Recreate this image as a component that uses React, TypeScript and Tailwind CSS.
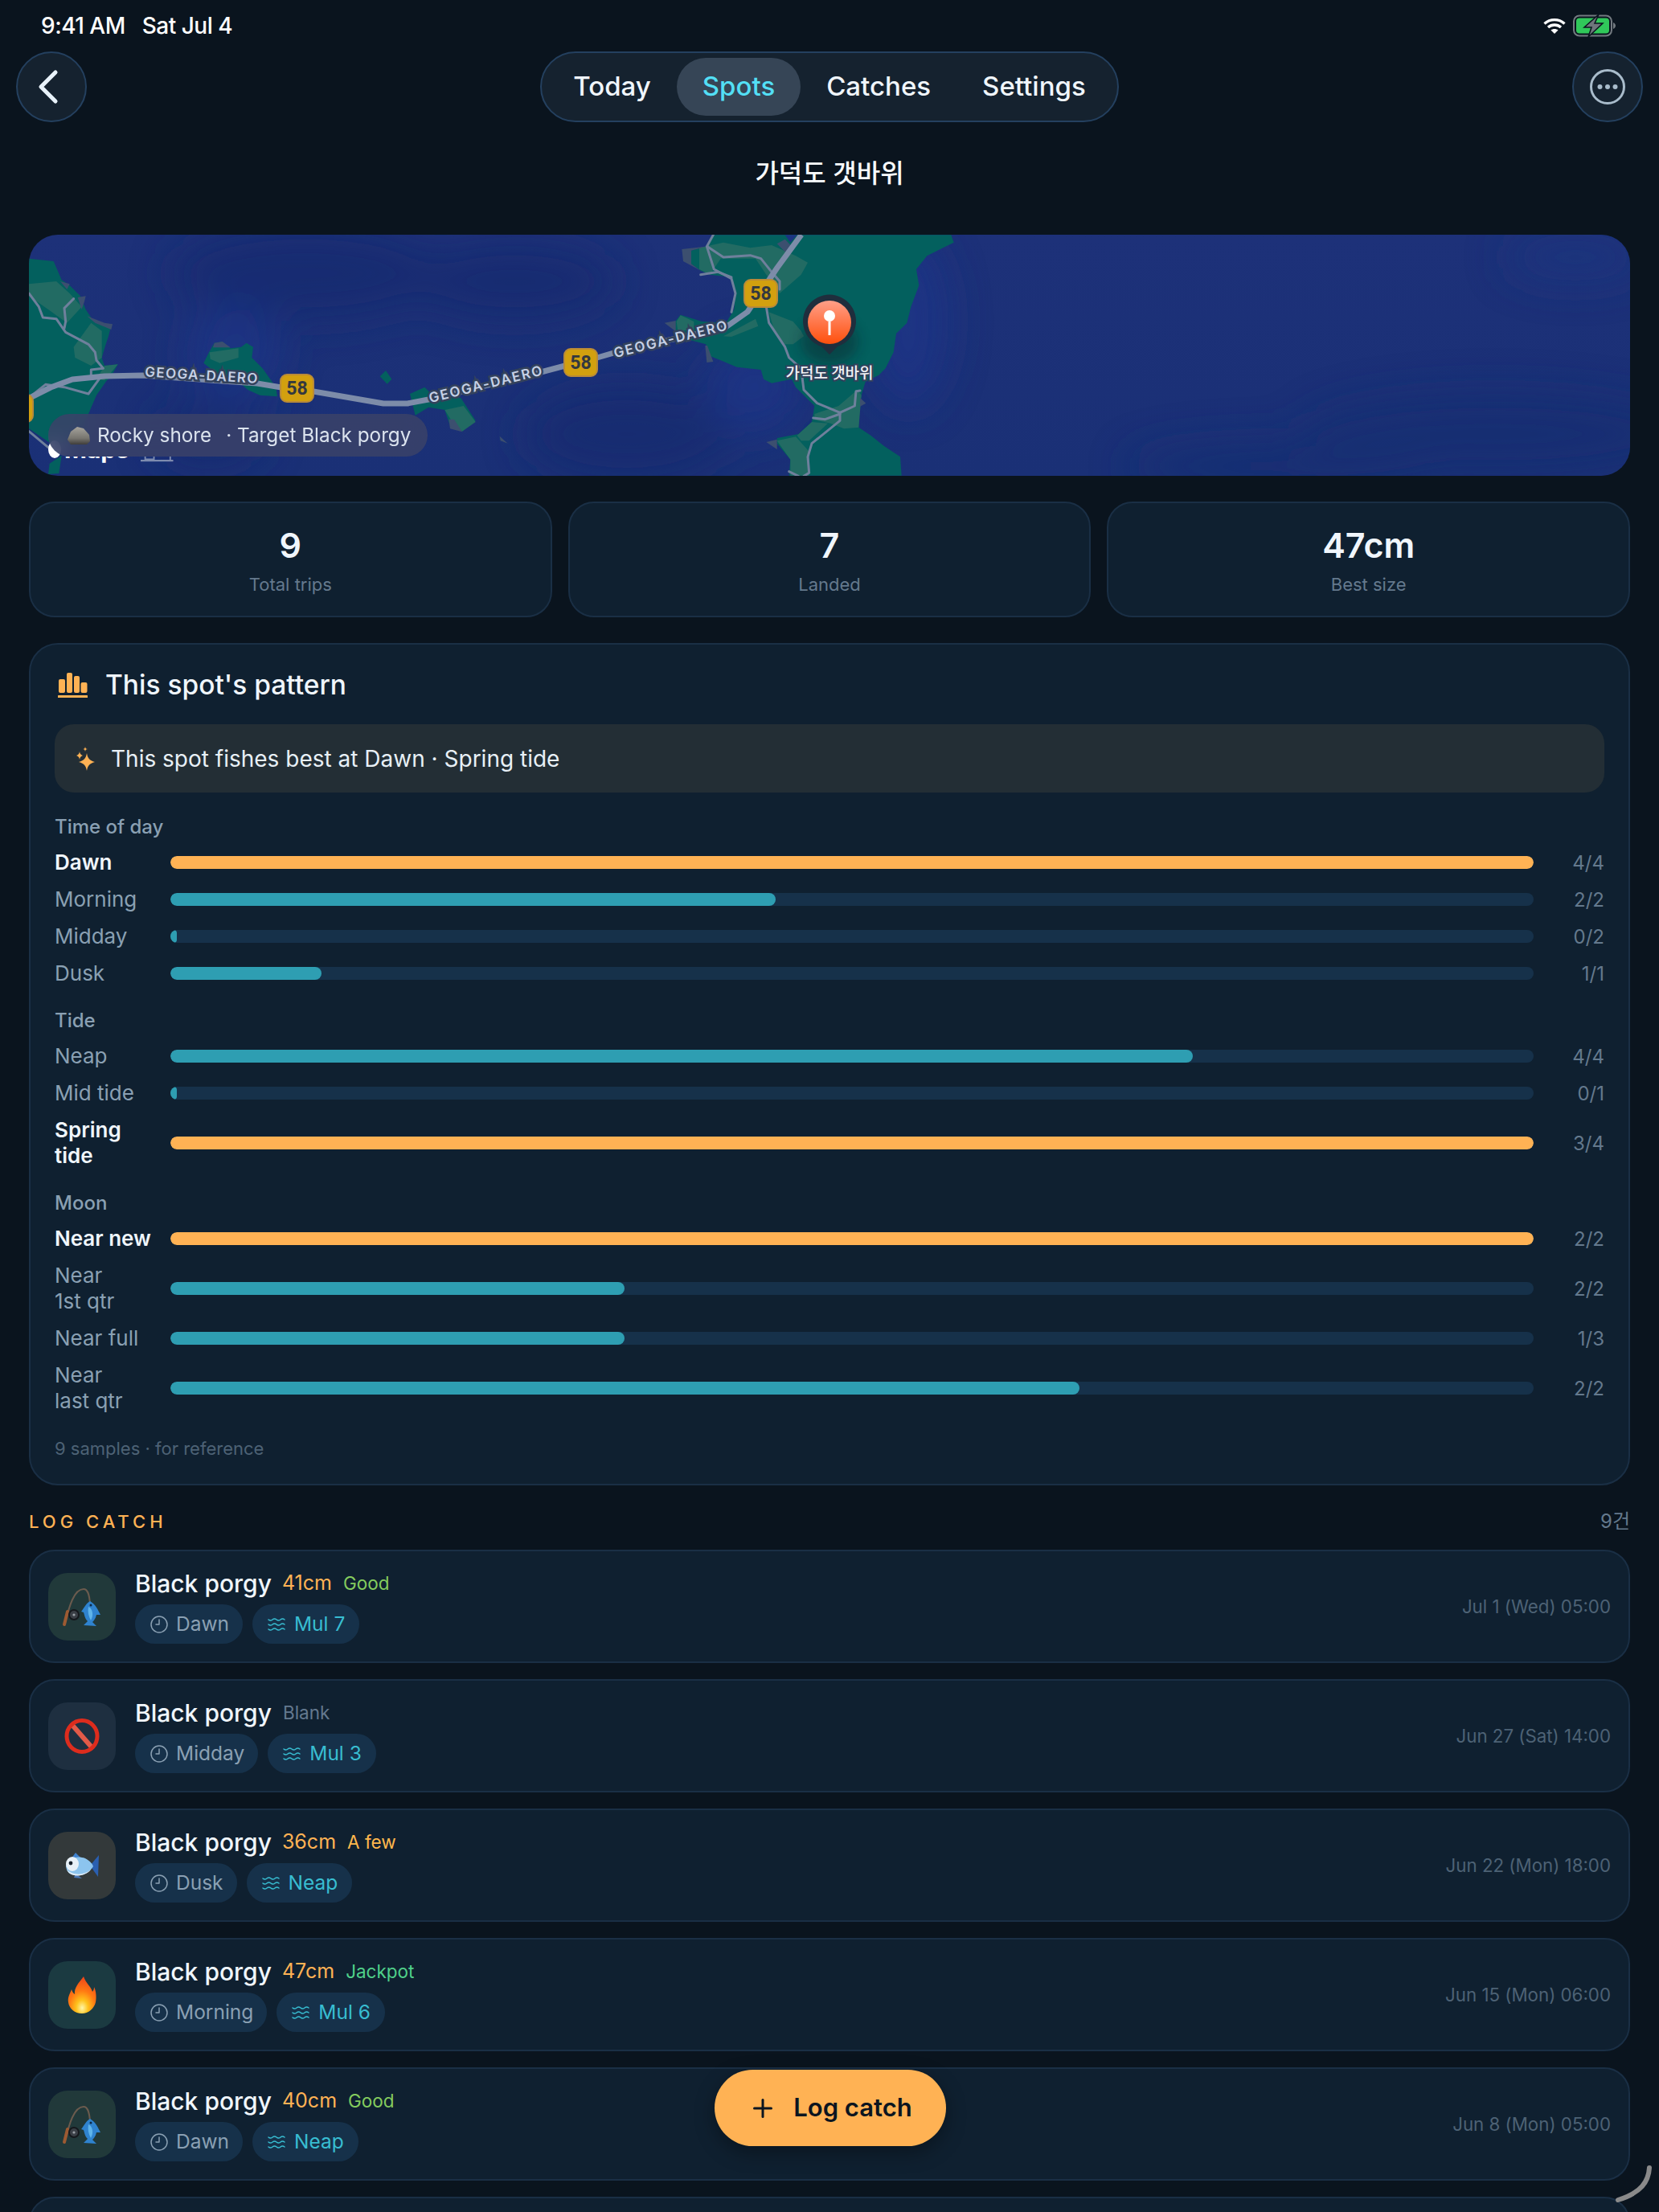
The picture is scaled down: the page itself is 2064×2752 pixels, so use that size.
import { ChevronLeft, Clock9, Plus, Waves } from 'lucide-react';

type Pt = [number, number];

// zoom crops of the map had these origins, all at 3x
const z9 = (p: Pt[]) => p.map(([x, y]) => `${800 + x / 3},${285 + y / 3}`).join(' ');
const z10 = (p: Pt[]) => p.map(([x, y]) => `${30 + x / 3},${285 + y / 3}`).join(' ');
const z12 = (p: Pt[]) => p.map(([x, y]) => `${500 + x / 3},${400 + y / 3}`).join(' ');

const LAND = '#03605e';
const LAND_LIGHT = '#226b63';
const ROCK = '#3c4f6f';
const ROAD = '#6f809c';
const HIGHWAY = '#7d8ca9';

function Badge({ x, y, label = true }: { x: number; y: number; label?: boolean }) {
  return (
    <g>
      <rect x={x} y={y} width="41" height="34" rx="8" fill="#d2a00f" stroke="#b98a38" strokeWidth="2" />
      {label && (
        <text x={x + 20.5} y={y + 25} textAnchor="middle" fontSize="23" fontWeight="700" fill="#33383f" fontFamily="Roboto, sans-serif">
          58
        </text>
      )}
    </g>
  );
}

function RoadLabel({ x, y, angle, spacing = 1.4 }: { x: number; y: number; angle: number; spacing?: number }) {
  return (
    <text
      x={x}
      y={y}
      transform={`rotate(${angle} ${x} ${y})`}
      textAnchor="middle"
      dominantBaseline="middle"
      fontSize="17"
      fontWeight="600"
      letterSpacing={spacing}
      fill="#c6d1e6"
      stroke="#33425c"
      strokeWidth="5"
      paintOrder="stroke"
      fontFamily="Inter, sans-serif"
    >
      GEOGA-DAERO
    </text>
  );
}

function MapDrawing() {
  return (
    <svg viewBox="36 292 1992 300" className="block w-full h-full">
      <defs>
        <linearGradient id="sea" x1="0" y1="0" x2="0" y2="1">
          <stop offset="0" stopColor="#1d3179" />
          <stop offset="1" stopColor="#1a3076" />
        </linearGradient>
        <linearGradient id="pinFill" x1="0" y1="0" x2="0" y2="1">
          <stop offset="0" stopColor="#ff9f88" />
          <stop offset="1" stopColor="#ff4f0c" />
        </linearGradient>
        <filter id="soft" x="-30%" y="-60%" width="160%" height="220%">
          <feGaussianBlur stdDeviation="26" />
        </filter>
        <filter id="pinShadow" x="-60%" y="-60%" width="220%" height="220%">
          <feGaussianBlur stdDeviation="8" />
        </filter>
        <clipPath id="belowChip">
          <rect x="36" y="568" width="400" height="24" />
        </clipPath>
      </defs>
      <rect x="36" y="292" width="1992" height="300" fill="url(#sea)" />
      <g filter="url(#soft)" opacity="0.75">
        <ellipse cx="380" cy="340" rx="170" ry="60" fill="#162b6f" />
        <ellipse cx="640" cy="350" rx="130" ry="50" fill="#172c70" />
        <ellipse cx="290" cy="440" rx="60" ry="60" fill="#1d3687" />
        <ellipse cx="780" cy="540" rx="130" ry="60" fill="#162c70" />
        <ellipse cx="260" cy="540" rx="70" ry="40" fill="#162c70" />
        <ellipse cx="940" cy="480" rx="60" ry="60" fill="#1c3588" />
        <ellipse cx="1130" cy="400" rx="50" ry="110" fill="#1c3588" />
        <ellipse cx="1860" cy="540" rx="240" ry="50" fill="#152e72" />
        <ellipse cx="1960" cy="320" rx="90" ry="30" fill="#1a367f" />
        <ellipse cx="1600" cy="580" rx="200" ry="30" fill="#152e72" />
      </g>

      {/* left coast */}
      <polygon
        fill={LAND}
        points={z10([[18, 110], [110, 120], [140, 190], [170, 210], [210, 250], [230, 300], [260, 345], [325, 360], [315, 400], [305, 430], [290, 480], [300, 510], [350, 505], [330, 540], [305, 570], [270, 620], [240, 690], [200, 790], [100, 800], [18, 745]])}
      />
      <polygon fill={LAND} points={z10([[95, 875], [140, 845], [130, 912], [90, 915]])} />
      <polygon fill={LAND_LIGHT} points={z10([[18, 205], [120, 195], [170, 240], [215, 290], [160, 350], [90, 300], [18, 250]])} />
      <polygon fill={LAND_LIGHT} points={z10([[185, 440], [250, 350], [290, 380], [290, 480], [250, 510], [190, 480]])} />
      <polygon fill={LAND_LIGHT} points={z10([[300, 510], [350, 505], [300, 565], [270, 560]])} />
      <polygon fill={ROCK} points={z10([[135, 195], [170, 205], [160, 225]])} />
      <polygon fill={ROCK} points={z10([[200, 255], [230, 250], [225, 270], [215, 300]])} />
      <polygon fill={ROCK} points={z10([[235, 325], [300, 350], [330, 355], [325, 375], [265, 350]])} />

      {/* islets */}
      <polygon
        fill={LAND}
        points={z10([[710, 425], [740, 420], [770, 445], [810, 440], [830, 425], [855, 440], [850, 480], [890, 520], [940, 590], [945, 625], [880, 620], [835, 600], [800, 570], [720, 540], [670, 500], [690, 460]])}
      />
      <polygon fill={LAND_LIGHT} points={z10([[692, 460], [800, 445], [800, 480], [730, 500], [695, 485]])} />
      <polygon fill={ROCK} points={z10([[710, 425], [740, 420], [770, 442], [705, 442]])} />
      <polygon fill={LAND} points={z10([[1350, 528], [1372, 560], [1355, 578], [1328, 550]])} />
      <polygon fill={LAND} points={z12([[30, 270], [85, 245], [110, 270], [220, 285], [275, 370], [225, 410], [180, 390], [160, 330], [100, 320], [50, 350]])} />
      <polygon fill={LAND_LIGHT} points={z12([[160, 330], [230, 315], [275, 375], [225, 410], [185, 370]])} />
      <polygon fill={ROCK} points={z12([[175, 365], [195, 365], [225, 412], [180, 400]])} />
      <polygon fill={ROCK} points={z12([[365, 428], [395, 455], [368, 445]])} />

      {/* main island */}
      <polygon
        fill={LAND}
        points={z9([[265, 22], [1150, 22], [1160, 50], [1120, 70], [1060, 100], [1020, 150], [1030, 210], [1000, 290], [985, 350], [945, 390], [935, 460], [905, 520], [880, 545], [830, 570], [815, 620], [805, 690], [805, 740], [850, 770], [900, 810], [960, 850], [965, 920], [545, 920], [550, 860], [500, 800], [500, 780], [580, 765], [630, 720], [640, 660], [600, 620], [570, 590], [555, 560], [480, 575], [450, 560], [440, 525], [350, 515], [290, 490], [240, 470], [235, 430], [120, 400], [120, 345], [140, 320], [220, 345], [310, 350], [340, 300], [345, 240], [330, 180], [250, 170], [215, 155], [180, 130], [180, 80], [235, 65]])}
      />
      <polygon fill={LAND_LIGHT} points={z9([[210, 70], [300, 50], [400, 70], [480, 60], [570, 100], [615, 125], [590, 170], [510, 240], [460, 170], [420, 110], [290, 110], [250, 170], [210, 150]])} />
      <polygon fill={LAND_LIGHT} points={z9([[470, 310], [560, 345], [590, 380], [600, 400], [560, 430], [530, 430], [490, 380]])} />
      <polygon fill={LAND_LIGHT} points={z9([[640, 690], [730, 660], [800, 600], [815, 620], [805, 740], [750, 745], [700, 725], [640, 712]])} />
      <polygon fill={LAND_LIGHT} points={z9([[630, 720], [690, 725], [620, 790], [590, 790], [575, 770]])} />
      <polygon fill={LAND_LIGHT} points={z9([[500, 790], [570, 775], [620, 830], [620, 920], [550, 920], [550, 860]])} />
      <polygon fill={LAND_LIGHT} points={z9([[300, 400], [420, 335], [430, 362], [330, 402]])} />
      <polygon fill={LAND_LIGHT} points={z9([[125, 345], [140, 322], [190, 345], [190, 375], [130, 380]])} />
      <polygon fill={ROCK} points={z9([[145, 75], [235, 65], [180, 80], [180, 130], [215, 155], [150, 120]])} />
      <polygon fill={ROCK} points={z9([[500, 55], [530, 38], [560, 70], [530, 85]])} />
      <polygon fill="#1c3482" points={z9([[530, 22], [575, 22], [550, 50]])} />
      <polygon fill={ROCK} points={z9([[80, 350], [122, 342], [122, 382]])} />
      <polygon fill={ROCK} points={z9([[232, 435], [240, 435], [262, 495], [238, 498]])} />
      <polygon fill={ROCK} points={z9([[460, 795], [500, 785], [500, 822]])} />
      <polygon fill={ROCK} points={z9([[810, 630], [832, 650], [810, 662]])} />

      {/* small roads */}
      <g fill="none" stroke={ROAD} strokeWidth="3" strokeLinejoin="round" strokeLinecap="round">
        <polyline points={z9([[240, 65], [300, 105], [400, 98], [440, 110], [480, 160], [510, 195], [510, 225]])} />
        <polyline points={z9([[262, 22], [238, 65], [265, 150], [330, 185], [345, 240], [330, 310]])} />
        <polyline points={z9([[215, 170], [280, 160], [330, 180]])} />
        <polyline points={z9([[460, 290], [470, 350], [530, 440], [545, 480], [590, 520], [600, 600], [650, 650], [735, 685], [790, 660], [795, 605], [810, 603]])} />
        <polyline points={z9([[735, 685], [735, 715], [630, 800], [615, 850], [620, 910], [600, 922]])} />
        <polyline points={z9([[635, 705], [680, 710], [735, 690]])} />
        <polyline points={z9([[545, 905], [580, 922]])} />
        <polyline points={z10([[18, 240], [55, 290], [70, 330], [120, 335], [155, 385], [240, 430], [265, 460], [270, 490], [295, 520], [250, 525], [250, 545]])} />
        <polyline points={z10([[185, 260], [150, 295], [155, 345], [150, 370]])} />
        <polyline points={z10([[30, 620], [80, 580], [150, 590], [240, 615], [280, 560]])} />
        <polyline points={z10([[18, 755], [90, 815]])} />
      </g>
      {/* highway 58 */}
      <polyline
        fill="none"
        stroke={HIGHWAY}
        strokeWidth="7"
        strokeLinejoin="round"
        points="37,495 63,482 90,472 130,468 177,467 320,477 350,482 390,487 477,502 507,502 533,497 673,463 703,455 743,445 767,438 903,407 930,388 967,333 997,292"
      />
      <RoadLabel x={251} y={468} angle={3.5} />
      <RoadLabel x={605} y={479} angle={-14} spacing={1.8} />
      <RoadLabel x={835} y={423} angle={-14} spacing={1.8} />
      <Badge x={0} y={491} label={false} />
      <Badge x={349} y={466} />
      <Badge x={702} y={434} />
      <Badge x={926} y={348} />

      {/* Maps mark, mostly under the chip */}
      <ellipse cx="68" cy="559" rx="8" ry="11" fill="#fff" />
      <g clipPath="url(#belowChip)">
        <text x="80" y="570" fontSize="30" fontWeight="700" fill="#fff" fontFamily="Inter, sans-serif">
          Maps
        </text>
        <text x="175" y="570" fontSize="22" fill="#aab4c8" opacity="0.7" textDecoration="underline" fontFamily="'Noto Sans CJK KR', sans-serif">
          법적
        </text>
      </g>

      {/* pin */}
      <ellipse cx="1032" cy="425" rx="36" ry="28" fill="#0c1a28" opacity="0.4" filter="url(#pinShadow)" />
      <path d="M1032 441 L1022 431 A33 33 0 1 1 1042 431 Z" fill="#1f2e3d" />
      <circle cx="1032" cy="401" r="27" fill="url(#pinFill)" />
      <circle cx="1032" cy="393" r="7" fill="#fff" />
      <rect x="1030.5" y="400" width="3" height="17" fill="#fff" />
      <text
        x="1032"
        y="471"
        textAnchor="middle"
        fontSize="19"
        fontWeight="500"
        fill="#f0f2f5"
        stroke="#33425c"
        strokeWidth="4"
        paintOrder="stroke"
        fontFamily="'Noto Sans CJK KR', sans-serif"
      >
        가덕도 갯바위
      </text>
    </svg>
  );
}

function RockEmoji() {
  return (
    <svg viewBox="0 0 30 24" className="w-[30px] h-[24px] shrink-0">
      <defs>
        <linearGradient id="rock" x1="0" y1="0" x2="0" y2="1">
          <stop offset="0" stopColor="#a5a39c" />
          <stop offset="0.65" stopColor="#77756f" />
          <stop offset="1" stopColor="#3f3d3a" />
        </linearGradient>
      </defs>
      <path d="M1 17 L5 7 L13 1 L21 3 L28 11 L29 19 L25 23 L5 23 Z" fill="url(#rock)" />
    </svg>
  );
}

function RodEmoji() {
  return (
    <svg viewBox="0 0 84 84" className="w-[84px] h-[84px]">
      <path d="M21 62 C26 42 32 20 44 20 C49 20 51 26 52 38" fill="none" stroke="#6b5b4e" strokeWidth="2" />
      <path d="M20 64 L24 48" stroke="#9c5a32" strokeWidth="4" strokeLinecap="round" />
      <circle cx="32" cy="52" r="6" fill="#3a3f46" stroke="#15181c" strokeWidth="2" />
      <circle cx="32" cy="52" r="1.6" fill="#9aa0a6" />
      <path d="M52 35 C59 39 62 46 65 52 L60 52 C59 57 56 60 55 61 L60 66 L44 65 L49 60 C45 56 45 51 44 49 L41 48 C45 43 47 38 52 35 Z" fill="#2f83cf" />
      <path d="M50 42 C55 44 57 52 53 59 C50 54 49 48 50 42 Z" fill="#5fb4ea" />
      <circle cx="53" cy="40" r="1.5" fill="#0b2a49" />
    </svg>
  );
}

function NoEmoji() {
  return (
    <svg viewBox="0 0 84 84" className="w-[84px] h-[84px]">
      <line x1="28" y1="26" x2="56" y2="58" stroke="#e25a48" strokeWidth="6" />
      <ellipse cx="42" cy="42" rx="19" ry="19.5" fill="none" stroke="#dd2c1d" strokeWidth="5" />
    </svg>
  );
}

function FishEmoji() {
  return (
    <svg viewBox="0 0 84 84" className="w-[84px] h-[84px]">
      <g transform="translate(-10 0)">
        <path d="M62 42 L73 29 L72 56 Z" fill="#2a5fb0" />
        <path d="M44 26 L52 34 L38 34 Z" fill="#3f82cf" />
        <path d="M44 52 L52 58 L42 57 Z" fill="#4a78b8" />
        <path d="M32 43 C33 33 46 29 56 33 C62 36 65 40 66 43 C62 50 54 55 44 54 C37 54 33 50 32 43 Z" fill="#8cc4ee" />
        <path d="M33 47 C40 54 54 55 63 47 C56 56 38 58 33 47 Z" fill="#e3eef7" />
        <ellipse cx="40" cy="40" rx="8" ry="9" fill="#e8f1f8" />
        <circle cx="38" cy="39" r="2.4" fill="#17212c" />
      </g>
    </svg>
  );
}

function FireEmoji() {
  return (
    <svg viewBox="0 0 84 84" className="w-[84px] h-[84px]">
      <defs>
        <radialGradient id="flame" cx="0.5" cy="0.85" r="0.85">
          <stop offset="0" stopColor="#fff6a8" />
          <stop offset="0.25" stopColor="#ffc21c" />
          <stop offset="0.55" stopColor="#ff7a12" />
          <stop offset="1" stopColor="#f0421a" />
        </radialGradient>
      </defs>
      <path
        d="M44 19 C47 28 53 31 55 38 C57 36 57 33 57 32 C60 38 60 46 59 51 C57 59 50 65 42 65 C33 65 26 59 25 51 C24 44 27 41 29 35 C30 38 31 40 33 41 C32 33 38 27 44 19 Z"
        fill="url(#flame)"
      />
    </svg>
  );
}

function BarChartIcon() {
  return (
    <svg viewBox="0 0 37 31" className="ml-1 w-[37px] h-[31px] shrink-0" fill="#ffb254">
      <rect x="1" y="8" width="8" height="17" rx="2" />
      <rect x="11" y="0" width="7" height="25" rx="2" />
      <rect x="20" y="4" width="7" height="21" rx="2" />
      <rect x="28.5" y="12" width="8" height="13" rx="2" />
      <rect x="0" y="28" width="37" height="3" rx="0.5" />
    </svg>
  );
}

function SparkleIcon() {
  return (
    <svg viewBox="0 0 24 30" className="w-[24px] h-[30px] shrink-0" fill="#ffb254">
      <path d="M13 8 C14 14 16 17 23 19 C16 21 14 24 13 30 C12 24 10 21 3 19 C10 17 12 14 13 8 Z" />
      <path d="M4 6 C4.500 9 5.500 10 8 11 C5.500 12 4.500 13 4 16 C3.500 13 2.500 12 0 11 C2.500 10 3.500 9 4 6 Z" />
      <path d="M11 0 C11.300 2 12 2.700 14 3 C12 3.300 11.300 4 11 6 C10.700 4 10 3.300 8 3 C10 2.700 10.700 2 11 0 Z" />
    </svg>
  );
}

function MoreIcon() {
  return (
    <svg viewBox="0 0 44 44" className="w-[44px] h-[44px]">
      <circle cx="22" cy="22" r="20.5" fill="none" stroke="#a9bccb" strokeWidth="3" />
      <circle cx="12.500" cy="22" r="3" fill="#a9bccb" />
      <circle cx="22" cy="22" r="3" fill="#a9bccb" />
      <circle cx="31.500" cy="22" r="3" fill="#a9bccb" />
    </svg>
  );
}

function WifiIcon() {
  return (
    <svg viewBox="0 0 28 20" className="w-[28px] h-[20px]" fill="none" stroke="#fff" strokeWidth="3.4">
      <path d="M1.500 7.500 C8.500 1 19.500 1 26.500 7.500" />
      <path d="M6 12 C10.500 8 17.500 8 22 12" />
      <path d="M14 20 L9.500 15.500 C12 13.500 16 13.500 18.500 15.500 Z" fill="#fff" stroke="none" />
    </svg>
  );
}

function BatteryIcon() {
  return (
    <svg viewBox="0 0 54 28" className="w-[54px] h-[28px]">
      <rect x="1" y="1.500" width="47" height="25" rx="7" fill="none" stroke="#737a80" strokeWidth="2" />
      <rect x="4" y="4.500" width="41" height="19" rx="4" fill="#30c85a" />
      <path d="M50 10 C52 11 53 12.500 53 14 C53 15.500 52 17 50 18 Z" fill="#737a80" />
      <path d="M32 0 L14 16 L23 16 L19 28 L37 11 L27 11 Z" fill="#6f767c" stroke="#0a141e" strokeWidth="1.500" />
    </svg>
  );
}

type Row = { label: string[]; pct: number; value: string; best?: boolean };

const sections: { title: string; rows: Row[] }[] = [
  {
    title: 'Time of day',
    rows: [
      { label: ['Dawn'], pct: 100, value: '4/4', best: true },
      { label: ['Morning'], pct: 44.4, value: '2/2' },
      { label: ['Midday'], pct: 0, value: '0/2' },
      { label: ['Dusk'], pct: 11.1, value: '1/1' },
    ],
  },
  {
    title: 'Tide',
    rows: [
      { label: ['Neap'], pct: 75, value: '4/4' },
      { label: ['Mid tide'], pct: 0, value: '0/1' },
      { label: ['Spring', 'tide'], pct: 100, value: '3/4', best: true },
    ],
  },
  {
    title: 'Moon',
    rows: [
      { label: ['Near new'], pct: 100, value: '2/2', best: true },
      { label: ['Near', '1st qtr'], pct: 33.3, value: '2/2' },
      { label: ['Near full'], pct: 33.3, value: '1/3' },
      { label: ['Near', 'last qtr'], pct: 66.7, value: '2/2' },
    ],
  },
];

const catches = [
  { icon: <RodEmoji />, box: 'bg-[#21393a]', size: '41cm', grade: 'Good', gradeClass: 'text-[#84cc5e]', time: 'Dawn', tide: 'Mul 7', date: 'Jul 1 (Wed) 05:00' },
  { icon: <NoEmoji />, box: 'bg-[#1e2f40]', size: '', grade: 'Blank', gradeClass: 'text-[#64798f]', time: 'Midday', tide: 'Mul 3', date: 'Jun 27 (Sat) 14:00' },
  { icon: <FishEmoji />, box: 'bg-[#33393a]', size: '36cm', grade: 'A few', gradeClass: 'text-[#ffb84d]', time: 'Dusk', tide: 'Neap', date: 'Jun 22 (Mon) 18:00' },
  { icon: <FireEmoji />, box: 'bg-[#1b3a41]', size: '47cm', grade: 'Jackpot', gradeClass: 'text-[#4fd08a]', time: 'Morning', tide: 'Mul 6', date: 'Jun 15 (Mon) 06:00' },
  { icon: <RodEmoji />, box: 'bg-[#21393a]', size: '40cm', grade: 'Good', gradeClass: 'text-[#84cc5e]', time: 'Dawn', tide: 'Neap', date: 'Jun 8 (Mon) 05:00' },
];

function PatternRow({ row }: { row: Row }) {
  return (
    <div className="flex items-center">
      <div className={`w-[144px] shrink-0 text-[26px] leading-[32px] ${row.best ? 'font-semibold text-[#f0f6fc]' : 'text-[#8aa0b3]'}`}>
        {row.label.map((l) => (
          <div key={l}>{l}</div>
        ))}
      </div>
      <div className="flex-1 h-4 rounded-full bg-[#16314a] overflow-hidden">
        <div
          className={`h-full rounded-full min-w-2 ${row.best ? 'bg-[#ffb254]' : 'bg-[#2e9eb2]'}`}
          style={{ width: `${row.pct}%` }}
        />
      </div>
      <div className="w-[88px] shrink-0 text-right text-[24px] leading-[32px] text-[#64798d] translate-y-px">{row.value}</div>
    </div>
  );
}

function Stat({ value, label }: { value: string; label: string }) {
  return (
    <div className="flex-1 h-[144px] rounded-[32px] border-2 border-[#1a2f45] bg-[#0f2030] flex flex-col items-center justify-center">
      <div className="text-[43px] leading-[54px] font-semibold text-[#f0f6fc]">{value}</div>
      <div className="mt-[7px] text-[22px] leading-[30px] text-[#64798d]">{label}</div>
    </div>
  );
}

export default function App() {
  return (
    <div className="relative w-[2064px] h-[2752px] overflow-hidden bg-[#0a141e] font-['Inter','Noto_Sans_CJK_KR',sans-serif] text-[#f0f6fc]">
      {/* status bar */}
      <div className="h-[64px] pl-[51px] pr-[53px] flex items-start justify-between">
        <div className="pt-[15px] text-[28px] leading-[34px] font-medium text-white flex gap-[21px] tracking-[-0.5px]">
          <span>9:41 AM</span>
          <span>Sat Jul 4</span>
        </div>
        <div className="pt-[18px] flex items-center gap-[9px]">
          <WifiIcon />
          <BatteryIcon />
        </div>
      </div>

      {/* top nav */}
      <div className="px-5 flex items-center justify-between">
        <button className="w-[88px] h-[88px] rounded-full border-2 border-[#24405f] bg-[#15222f] flex items-center justify-center">
          <ChevronLeft size={72} strokeWidth={1.7} color="#e8f2fa" className="-translate-x-1" />
        </button>
        <div className="h-[88px] rounded-[44px] border-2 border-[#24405f] bg-[#15222f] px-[7px] flex items-center text-[33px] font-medium">
          <div className="h-[72px] px-8 flex items-center">Today</div>
          <div className="h-[72px] px-8 flex items-center rounded-[36px] bg-[#364556] text-[#53dff5]">Spots</div>
          <div className="h-[72px] px-8 flex items-center">Catches</div>
          <div className="h-[72px] px-8 flex items-center">Settings</div>
        </div>
        <button className="w-[88px] h-[88px] rounded-full border-2 border-[#24405f] bg-[#15222f] flex items-center justify-center">
          <MoreIcon />
        </button>
      </div>

      <h1 className="mt-[41px] h-[46px] text-center text-[32px] leading-[46px] font-medium text-[#f7fafc]">가덕도 갯바위</h1>

      <div className="mt-[53px] px-9">
        {/* map */}
        <div className="relative h-[300px] rounded-[36px] overflow-hidden">
          <MapDrawing />
          <div className="absolute left-6 top-[223px] h-[53px] pl-[23px] pr-[21px] rounded-full bg-[#3b4268]/85 backdrop-blur-md flex items-center text-[24.3px] text-[#dbe3ee] whitespace-pre">
            <RockEmoji />
            <span className="ml-2">Rocky shore</span>
            <span className="ml-[18px]">· Target Black porgy</span>
          </div>
        </div>

        {/* stats */}
        <div className="mt-8 flex gap-5">
          <Stat value="9" label="Total trips" />
          <Stat value="7" label="Landed" />
          <Stat value="47cm" label="Best size" />
        </div>

        {/* pattern */}
        <div className="mt-8 h-[1048px] rounded-[36px] border-2 border-[#1a2f45] bg-[#0f2030] p-[30px]">
          <div className="h-10 flex items-center gap-[22px]">
            <BarChartIcon />
            <div className="text-[33.5px] font-medium">This spot's pattern</div>
          </div>
          <div className="mt-[29px] h-[85px] rounded-[24px] bg-[#232e35] pl-[27px] flex items-center gap-[19px] text-[28px] text-[#e8f0f6]">
            <SparkleIcon />
            <span>This spot fishes best at Dawn · Spring tide</span>
          </div>
          <div className="mt-7 flex flex-col gap-7">
            {sections.map((s) => (
              <div key={s.title}>
                <div className="h-7 text-[24px] leading-[30px] font-medium text-[#8aa0b3]">{s.title}</div>
                <div className="mt-[15px] flex flex-col gap-[14px]">
                  {s.rows.map((r) => (
                    <PatternRow key={r.label.join(' ')} row={r} />
                  ))}
                </div>
              </div>
            ))}
          </div>
          <div className="mt-[29px] h-7 text-[22px] leading-[28px] text-[#4d6275]">9 samples · for reference</div>
        </div>

        {/* log */}
        <div className="mt-[31px] h-7 flex items-center justify-between">
          <span className="text-[22px] font-medium tracking-[5px] text-[#ffb254]">LOG CATCH</span>
          <span className="text-[24px] text-[#64798d]">9건</span>
        </div>
        <div className="mt-[21px] flex flex-col gap-5">
          {catches.map((c) => (
            <div key={c.date} className="h-[141px] rounded-[32px] border-2 border-[#1a2f45] bg-[#0f2030] pl-[22px] pr-[22px] flex items-center">
              <div className={`w-[84px] h-[84px] shrink-0 rounded-[24px] ${c.box}`}>{c.icon}</div>
              <div className="ml-6">
                <div className="h-[38px] flex items-center -translate-y-px">
                  <span className="text-[30px] font-medium">Black porgy</span>
                  {c.size && <span className="ml-[13px] text-[25px] text-[#ffb254]">{c.size}</span>}
                  <span className={`ml-[14px] text-[22.5px] ${c.gradeClass}`}>{c.grade}</span>
                </div>
                <div className="mt-[6px] flex gap-3">
                  <div className="h-[49px] pl-[18px] pr-[17px] rounded-full bg-[#16314a] flex items-center gap-[9px] text-[24.5px] text-[#8aa0b3]">
                    <Clock9 size={24} strokeWidth={1.5} />
                    {c.time}
                  </div>
                  <div className="h-[49px] pl-[18px] pr-[18px] rounded-full bg-[#16314a] flex items-center gap-[10px] text-[24.5px] text-[#38bdd1]">
                    <Waves size={24} strokeWidth={1.5} />
                    {c.tide}
                  </div>
                </div>
              </div>
              <div className="ml-auto text-[22.3px] text-[#4d6275]">{c.date}</div>
            </div>
          ))}
          <div className="h-[141px] rounded-[32px] border-2 border-[#1a2f45] bg-[#0f2030]" />
        </div>
      </div>

      {/* floating button */}
      <button className="absolute left-[889px] top-[2575px] w-[288px] h-[95px] rounded-[48px] bg-[#ffb254] shadow-[0_8px_24px_rgba(0,0,0,0.35)] flex items-center justify-center gap-[20px] text-[31px] font-semibold text-[#0b1520]">
        <Plus size={36} strokeWidth={2} />
        Log catch
      </button>

      {/* corner mark from the device */}
      <svg viewBox="0 0 60 60" className="absolute left-[2004px] top-[2690px] w-[60px] h-[60px]" fill="none">
        <path d="M48 7 C47 24 38 38 9 47" stroke="#8a8a8a" strokeWidth="6" strokeLinecap="round" />
      </svg>
    </div>
  );
}
